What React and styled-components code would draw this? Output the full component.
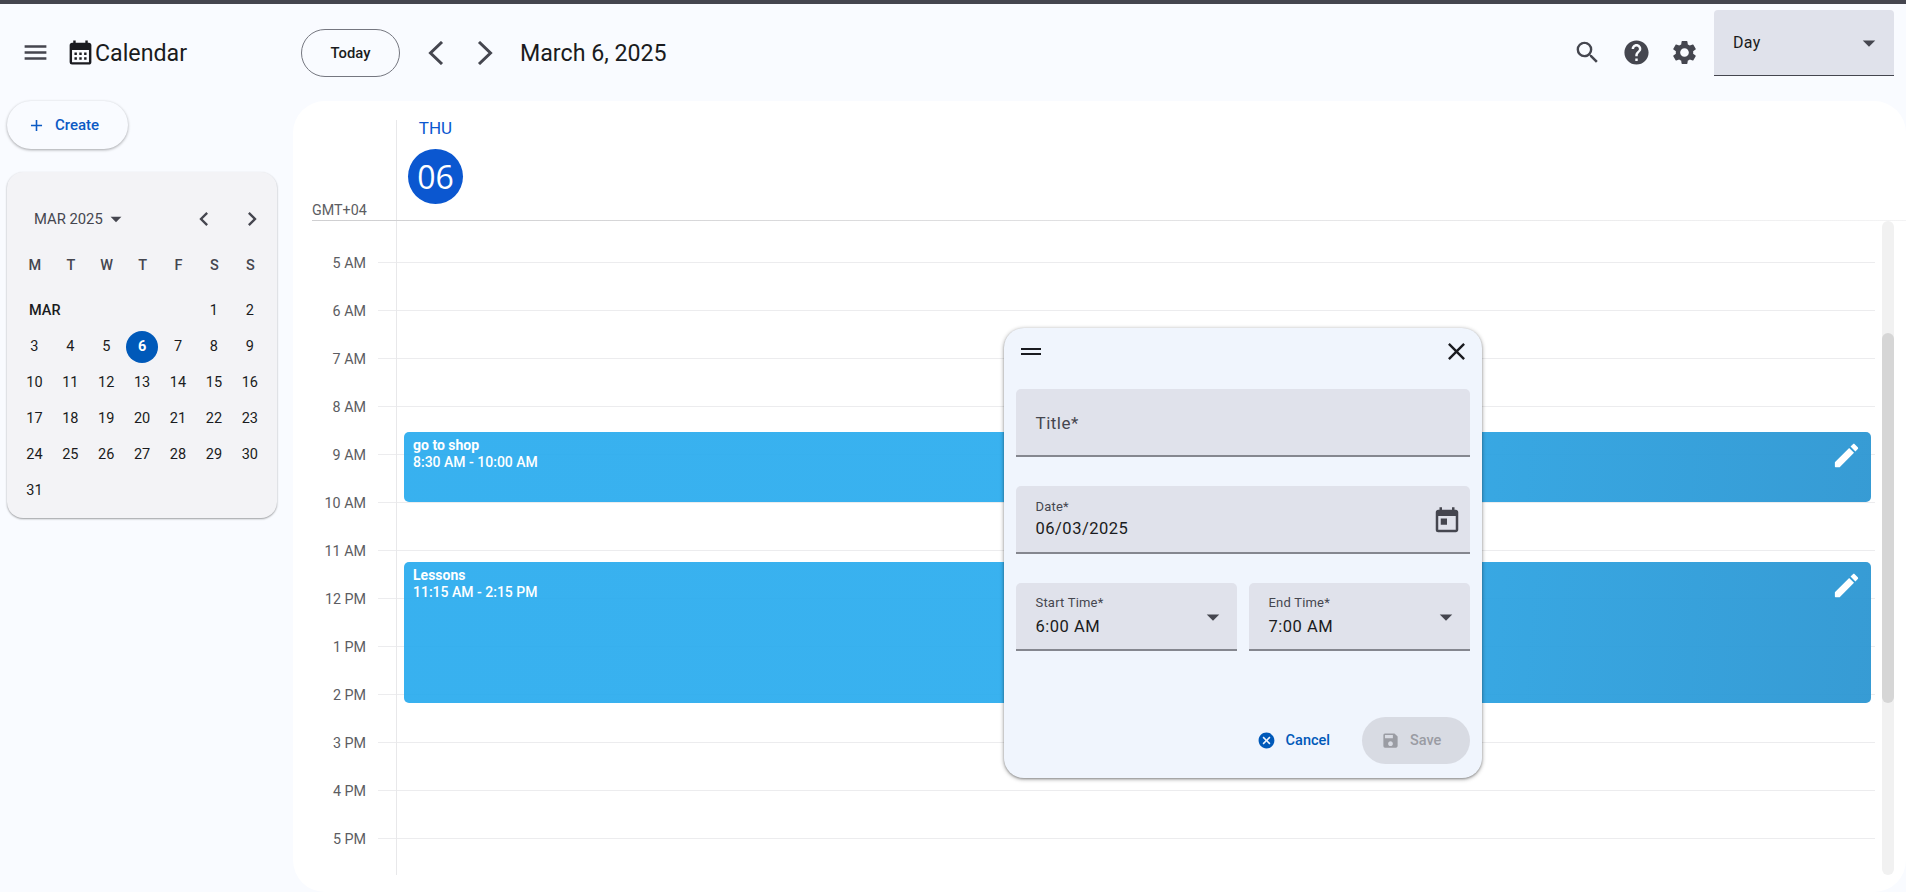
import React from 'react'
import styled, { createGlobalStyle } from 'styled-components'
import {
  MdMenu, MdCalendarMonth, MdSearch, MdHelp, MdSettings, MdArrowDropDown, MdAdd,
  MdChevronLeft, MdChevronRight, MdClose, MdToday, MdCancel, MdSave,
} from 'react-icons/md'

const GlobalStyle = createGlobalStyle`
  html, body { margin: 0; padding: 0; height: 100%; overflow: hidden; }
  body { font-family: Roboto, "Liberation Sans", sans-serif; color: #1a1b20; background: #f9fbff; }
  * { box-sizing: border-box; }
`

const Page = styled.div`
  position: relative;
  display: flex;
  flex-direction: column;
  height: 892px;
  overflow: hidden;
  background: #f9fbff;
`
const TopEdge = styled.div`
  height: 4px;
  flex: none;
  background: #45464f;
`

/* header */
const Header = styled.header`
  display: flex;
  align-items: center;
  height: 97px;
  flex: none;
`
const Brand = styled.div`
  display: flex;
  align-items: center;
  width: 301px;
  padding-left: 21px;
  font-size: 23.2px;
  color: #1a1b20;
  svg { flex: none; }
  svg:first-child { color: #45464f; margin-right: 16px; }
`
const TodayButton = styled.button`
  width: 99px;
  height: 48px;
  border: 1px solid #757780;
  border-radius: 24px;
  background: transparent;
  font: 500 14.8px Roboto, sans-serif;
  color: #1a1b20;
`
const NavArrows = styled.div`
  display: flex;
  gap: 25px;
  margin-left: 24px;
  color: #45464f;
`
const DateTitle = styled.div`
  margin-left: 23px;
  font-size: 23.2px;
  color: #1a1b20;
`
const HeaderTools = styled.div`
  display: flex;
  align-items: center;
  gap: 19.5px;
  margin-left: auto;
  color: #45464f;
`
const ViewSelect = styled.div`
  display: flex;
  align-items: center;
  justify-content: space-between;
  align-self: flex-start;
  width: 180px;
  height: 66px;
  margin: 6px 12px 0 15px;
  padding: 0 10px 0 19px;
  background: #e0e2eb;
  border-radius: 4px 4px 0 0;
  border-bottom: 1px solid #45464f;
  font-size: 16px;
  letter-spacing: 0.3px;
  svg { color: #45464f; }
`

/* sidebar */
const Body = styled.div`
  display: grid;
  grid-template-columns: 293px 1fr;
  flex: 1;
  min-height: 0;
`
const Sidebar = styled.aside`
  padding-left: 7px;
`
const CreateButton = styled.button`
  display: flex;
  align-items: center;
  width: 121px;
  height: 48px;
  padding: 0 0 0 20px;
  gap: 9px;
  border: 0;
  border-radius: 24px;
  background: #f9fbff;
  box-shadow: 0 1px 3px rgba(0, 0, 0, 0.35);
  font: 500 15px Roboto, sans-serif;
  color: #0b5ac4;
`
const MiniCalendar = styled.section`
  width: 270px;
  height: 346px;
  margin-top: 23px;
  padding: 0 10px;
  background: #f3f3f6;
  border-radius: 16px;
  box-shadow: 0 1px 2px rgba(0, 0, 0, 0.38);
`
const MiniHeader = styled.div`
  display: flex;
  align-items: center;
  height: 94px;
  padding: 0 0 0 17px;
  font-size: 14.8px;
  color: #45464f;
`
const MiniMonth = styled.div`
  display: flex;
  align-items: center;
`
const MiniArrows = styled.div`
  display: flex;
  gap: 20px;
  margin-left: auto;
  margin-right: 1px;
`
const WeekHead = styled.div`
  display: grid;
  grid-template-columns: repeat(7, 35.9px);
  height: 24px;
  align-items: center;
  justify-items: center;
  margin: -13px 0 0;
  font-size: 14.5px;
  font-weight: 500;
  color: #45464f;
`
const DayGrid = styled.div`
  display: grid;
  grid-template-columns: repeat(7, 35.9px);
  grid-auto-rows: 36px;
  margin-top: 15.5px;
  font-size: 14.5px;
`
const MonthTag = styled.div`
  grid-column: 1 / span 5;
  display: flex;
  align-items: center;
  padding-left: 12px;
  font-weight: 500;
`
const DayCell = styled.div`
  display: flex;
  align-items: center;
  justify-content: center;
  span {
    display: flex;
    align-items: center;
    justify-content: center;
    width: 32px;
    height: 32px;
    margin-left: -1px;
    border-radius: 50%;
    background: ${p => (p.$selected ? '#0059b9' : 'transparent')};
    color: ${p => (p.$selected ? '#fff' : '#1a1b20')};
    font-weight: ${p => (p.$selected ? 700 : 400)};
  }
`

/* day view */
const Main = styled.main`
  display: flex;
  flex-direction: column;
  background: #fff;
  border-radius: 32px;
  min-width: 0;
`
const DayHead = styled.div`
  display: flex;
  height: 120px;
  flex: none;
  margin-left: 19px;
  border-bottom: 1px solid #cfcfd1;
  border-image: linear-gradient(to right, #cfcfd1, #f3f3f4) 1;
`
const ZoneLabel = styled.div`
  width: 84px;
  flex: none;
  margin-top: auto;
  padding-bottom: 2px;
  font-size: 14.3px;
  line-height: 16px;
  color: #5c5d62;
`
const DayColumn = styled.div`
  display: flex;
  flex-direction: column;
  align-items: flex-start;
  margin-top: 19px;
  padding-left: 11px;
  border-left: 1px solid #e8e8ea;
`
const DayName = styled.div`
  width: 55px;
  margin-top: -1px;
  text-align: center;
  font-size: 17px;
  line-height: 18px;
  color: #0b57d0;
`
const DayNumber = styled.div`
  display: flex;
  align-items: center;
  justify-content: center;
  width: 55px;
  height: 55px;
  margin-top: 12px;
  border-radius: 50%;
  background: #0b57d0;
  color: #fff;
  font-family: "Open Sans", Roboto, sans-serif;
  font-size: 32px;
  font-weight: 500;
`
const Schedule = styled.div`
  display: flex;
  height: 654px;
  flex: none;
`
const HourList = styled.div`
  position: relative;
  flex: 1;
  padding: 17px 7px 0 0;
  &::before {
    content: "";
    position: absolute;
    top: 0;
    bottom: 0;
    left: 103px;
    width: 1px;
    background: #e8e8ea;
  }
`
const HourRow = styled.div`
  display: flex;
  align-items: center;
  height: 48px;
  gap: 12px;
  &::after {
    content: "";
    flex: 1;
    height: 1px;
    background: #ececee;
  }
`
const HourLabel = styled.div`
  width: 73px;
  padding-top: 2px;
  text-align: right;
  font-size: 14.3px;
  color: #5c5d62;
`
const EventCard = styled.div`
  position: absolute;
  left: 111px;
  right: 11px;
  top: ${p => p.$top}px;
  height: ${p => p.$height}px;
  padding: 5px 9px;
  border-radius: 5px;
  background: linear-gradient(95deg, rgba(41, 171, 238, 0.93) 0%, rgba(42, 172, 238, 0.93) 50%, rgba(44, 150, 210, 0.95) 100%);
  color: #fff;
  font-size: 14px;
  line-height: 17px;
  font-weight: 500;
  b { display: block; font-weight: 700; }
`
const EditButton = styled.div`
  position: absolute;
  top: 8px;
  right: 9px;
  line-height: 0;
`
const ScrollTrack = styled.div`
  flex: none;
  width: 12px;
  margin-right: 12px;
  padding-top: 112px;
  background: #f1f1f1;
  border-radius: 6px;
`
const ScrollThumb = styled.div`
  height: 370px;
  background: #d6d6d6;
  border-radius: 6px;
`

/* event dialog */
const Dialog = styled.div`
  position: absolute;
  top: 328px;
  left: 1004px;
  display: flex;
  flex-direction: column;
  width: 478px;
  height: 450px;
  padding: 0 12px 14px;
  background: #f0f5fd;
  border-radius: 20px;
  box-shadow: 0 1px 4px rgba(0, 0, 0, 0.4), 0 1px 2px rgba(0, 0, 0, 0.2);
`
const DialogHead = styled.div`
  display: flex;
  align-items: center;
  justify-content: space-between;
  height: 47px;
  margin-bottom: 14px;
  padding-left: 5px;
  margin-right: -1px;
  color: #1a1b20;
`
const DragHandle = styled.div`
  width: 20px;
  height: 7px;
  border-top: 2.4px solid #1a1b20;
  border-bottom: 2.4px solid #1a1b20;
`
const Form = styled.div`
  display: flex;
  flex-direction: column;
  gap: 29.5px;
`
const FieldRow = styled.div`
  display: grid;
  grid-template-columns: 1fr 1fr;
  gap: 12px;
`
const Field = styled.div`
  display: flex;
  align-items: center;
  justify-content: space-between;
  height: 67.5px;
  padding: 2px 8px 0 19.5px;
  background: #e0e2eb;
  border-radius: 5px 5px 0 0;
  border-bottom: 2px solid #85878f;
  svg { flex: none; color: #45464f; }
`
const Placeholder = styled.div`
  font-size: 17px;
  letter-spacing: 0.5px;
  color: #45464f;
`
const FieldText = styled.div`
  display: flex;
  flex-direction: column;
  gap: ${p => p.$gap}px;
`
const FieldLabel = styled.label`
  font-size: 13px;
  line-height: 16px;
  letter-spacing: 0.2px;
  color: #45464f;
`
const FieldValue = styled.div`
  font-size: 16.5px;
  line-height: 24px;
  letter-spacing: 0.5px;
  color: #1a1b20;
`
const TodayIcon = styled(MdToday)`
  margin-top: 2px;
`
const Caret = styled(MdArrowDropDown)`
  margin-right: 1px;
`
const DialogActions = styled.div`
  display: flex;
  align-items: center;
  justify-content: flex-end;
  gap: 32px;
  margin-top: auto;
`
const CancelButton = styled.button`
  display: flex;
  align-items: center;
  gap: 10px;
  padding: 0;
  border: 0;
  background: none;
  font: 500 14.5px Roboto, sans-serif;
  color: #0059b9;
`
const SaveButton = styled.button`
  display: flex;
  align-items: center;
  gap: 10px;
  width: 108px;
  height: 47px;
  padding: 0 0 0 19px;
  border: 0;
  border-radius: 24px;
  background: #d8dbe3;
  font: 500 14.5px Roboto, sans-serif;
  color: #9a9ca3;
`

const Chevron = ({ dir }) => (
  <svg width="24" height="24" viewBox="0 0 24 24" fill="none" stroke="currentColor" strokeWidth="3">
    <polyline points={dir === 'left' ? '18,1 6.5,12 18,23' : '6,1 17.5,12 6,23'} />
  </svg>
)

const PencilIcon = () => (
  <svg width="31" height="31" viewBox="0 0 24 24" fill="#fff">
    <path d="M3 17.46v3.04c0 .28.22.5.5.5h3.04c.13 0 .26-.05.35-.15L17.81 9.94l-3.75-3.75L3.15 17.1c-.1.1-.15.22-.15.36zM20.71 7.04c.39-.39.39-1.02 0-1.41l-2.34-2.34c-.39-.39-1.02-.39-1.41 0l-1.83 1.83 3.75 3.75 1.83-1.83z" />
  </svg>
)

const weekdays = ['M', 'T', 'W', 'T', 'F', 'S', 'S']
const days = Array.from({ length: 31 }, (_, i) => i + 1)
const hours = ['5 AM', '6 AM', '7 AM', '8 AM', '9 AM', '10 AM', '11 AM', '12 PM', '1 PM', '2 PM', '3 PM', '4 PM', '5 PM']
const events = [
  { title: 'go to shop', time: '8:30 AM - 10:00 AM', top: 211, height: 70 },
  { title: 'Lessons', time: '11:15 AM - 2:15 PM', top: 341, height: 141 },
]

export default function App() {
  return (
    <Page>
      <GlobalStyle />
      <TopEdge />
      <Header>
        <Brand>
          <MdMenu size={29} />
          <MdCalendarMonth size={29} />
          Calendar
        </Brand>
        <TodayButton>Today</TodayButton>
        <NavArrows>
          <Chevron dir="left" />
          <Chevron dir="right" />
        </NavArrows>
        <DateTitle>March 6, 2025</DateTitle>
        <HeaderTools>
          <MdSearch size={29} />
          <MdHelp size={29} />
          <MdSettings size={29} />
        </HeaderTools>
        <ViewSelect>
          Day
          <MdArrowDropDown size={30} />
        </ViewSelect>
      </Header>
      <Body>
        <Sidebar>
          <CreateButton>
            <MdAdd size={19} />
            Create
          </CreateButton>
          <MiniCalendar>
            <MiniHeader>
              <MiniMonth>
                MAR 2025
                <MdArrowDropDown size={26} />
              </MiniMonth>
              <MiniArrows>
                <MdChevronLeft size={28} />
                <MdChevronRight size={28} />
              </MiniArrows>
            </MiniHeader>
            <WeekHead>
              {weekdays.map((d, i) => <div key={i}>{d}</div>)}
            </WeekHead>
            <DayGrid>
              <MonthTag>MAR</MonthTag>
              {days.map(d => (
                <DayCell key={d} $selected={d === 6}><span>{d}</span></DayCell>
              ))}
            </DayGrid>
          </MiniCalendar>
        </Sidebar>
        <Main>
          <DayHead>
            <ZoneLabel>GMT+04</ZoneLabel>
            <DayColumn>
              <DayName>THU</DayName>
              <DayNumber>06</DayNumber>
            </DayColumn>
          </DayHead>
          <Schedule>
            <HourList>
              {hours.map(h => (
                <HourRow key={h}><HourLabel>{h}</HourLabel></HourRow>
              ))}
              {events.map(e => (
                <EventCard key={e.title} $top={e.top} $height={e.height}>
                  <b>{e.title}</b>
                  {e.time}
                  <EditButton><PencilIcon /></EditButton>
                </EventCard>
              ))}
            </HourList>
            <ScrollTrack><ScrollThumb /></ScrollTrack>
          </Schedule>
        </Main>
      </Body>
      <Dialog>
        <DialogHead>
          <DragHandle />
          <MdClose size={29} />
        </DialogHead>
        <Form>
          <Field><Placeholder>Title*</Placeholder></Field>
          <Field>
            <FieldText $gap={2}>
              <FieldLabel>Date*</FieldLabel>
              <FieldValue>06/03/2025</FieldValue>
            </FieldText>
            <TodayIcon size={30} />
          </Field>
          <FieldRow>
            <Field>
              <FieldText $gap={4}>
                <FieldLabel>Start Time*</FieldLabel>
                <FieldValue>6:00 AM</FieldValue>
              </FieldText>
              <Caret size={30} />
            </Field>
            <Field>
              <FieldText $gap={4}>
                <FieldLabel>End Time*</FieldLabel>
                <FieldValue>7:00 AM</FieldValue>
              </FieldText>
              <Caret size={30} />
            </Field>
          </FieldRow>
        </Form>
        <DialogActions>
          <CancelButton>
            <MdCancel size={19} />
            Cancel
          </CancelButton>
          <SaveButton>
            <MdSave size={19} />
            Save
          </SaveButton>
        </DialogActions>
      </Dialog>
    </Page>
  )
}
